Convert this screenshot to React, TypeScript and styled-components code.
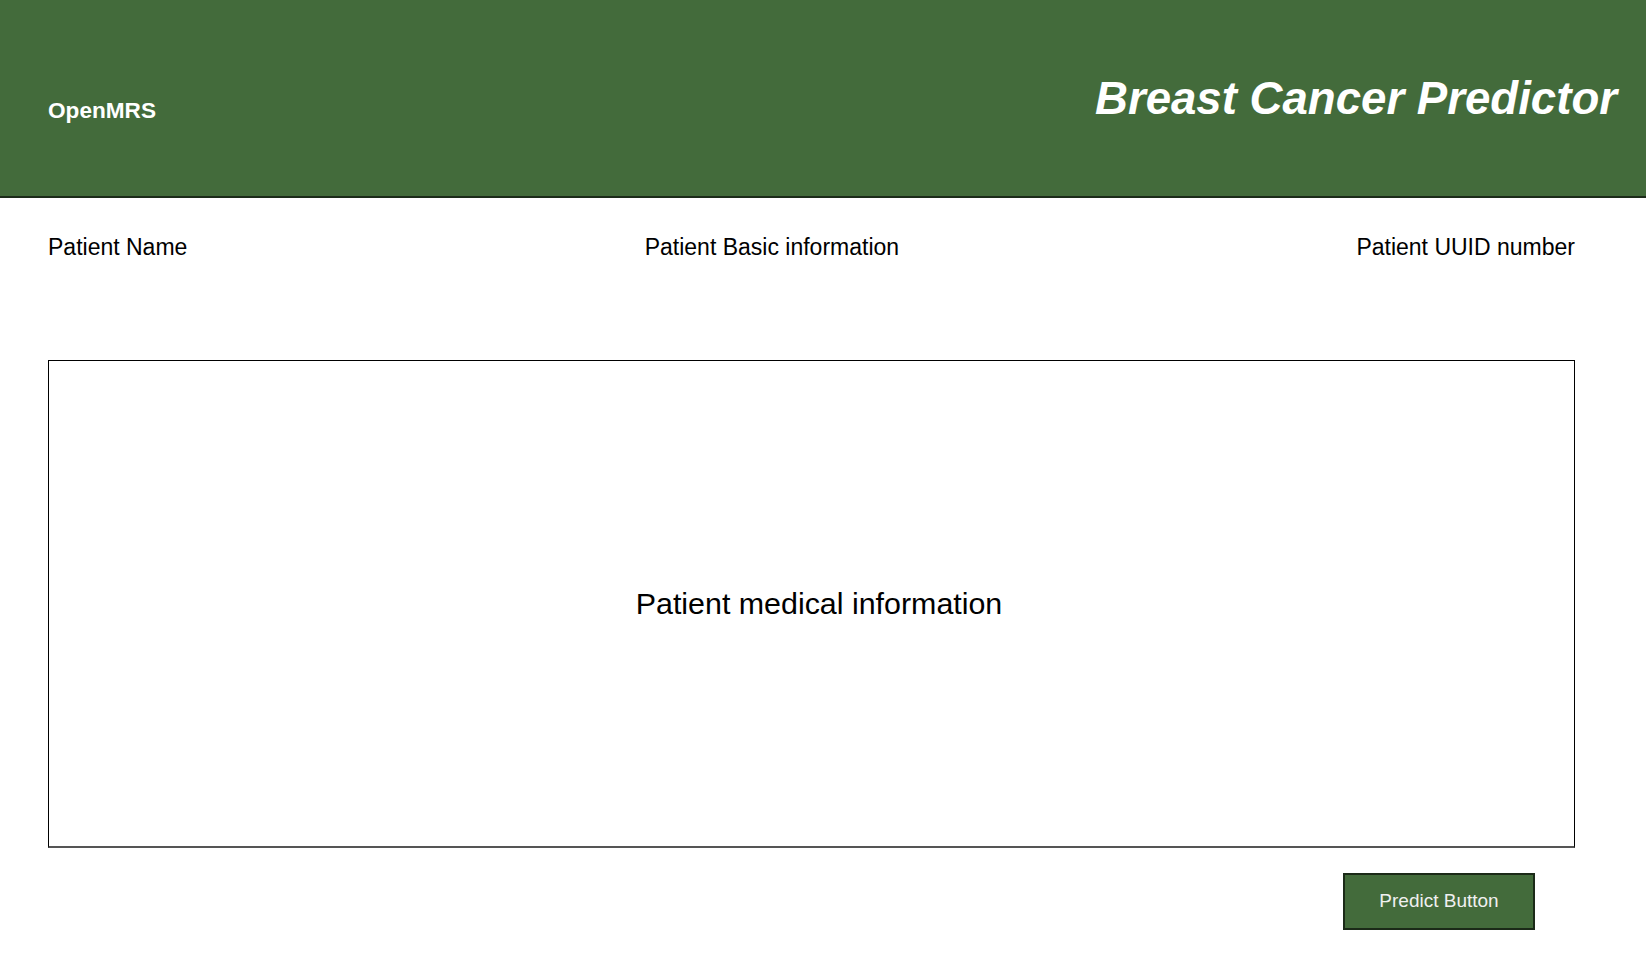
import React from "react";
import styled, { createGlobalStyle } from "styled-components";

const GREEN = "#436b3b";

const Global = createGlobalStyle`
  html, body { margin: 0; padding: 0; background: #ffffff; }
  body { font-family: "Liberation Sans", Arial, sans-serif; color: #000; }
`;

const Page = styled.div`
  width: 1646px;
  min-height: 972px;
  display: flex;
  flex-direction: column;
`;

const Header = styled.header`
  height: 196px;
  background: ${GREEN};
  border-bottom: 2px solid #1c2b19;
  display: flex;
  align-items: center;
  justify-content: space-between;
  padding: 0 29px 0 48px;
`;

const Brand = styled.div`
  color: #ffffff;
  font-weight: bold;
  font-size: 22.6px;
  margin-top: 26px;
`;

const Title = styled.h1`
  margin: 0;
  color: #ffffff;
  font-weight: bold;
  font-style: italic;
  font-size: 45.6px;
  margin-top: 2px;
`;

const Content = styled.main`
  width: 1527px;
  padding: 0 0 0 48px;
  display: flex;
  flex-direction: column;
`;

const InfoRow = styled.div`
  display: flex;
  justify-content: space-between;
  align-items: baseline;
  margin-top: 35px;
  height: 127px;
`;

const InfoLabel = styled.span`
  font-size: 23px;
  line-height: 28px;
`;

const MedicalBox = styled.section`
  height: 485px;
  border: 1px solid #000;
  border-bottom: 2px solid #555;
  display: flex;
  align-items: center;
  justify-content: center;
  padding-left: 15px;
`;

const MedicalText = styled.span`
  font-size: 30.4px;
`;

const Actions = styled.div`
  display: flex;
  justify-content: flex-end;
  padding-right: 40px;
  margin-top: 25px;
`;

const PredictButton = styled.button`
  width: 192px;
  height: 57px;
  background: ${GREEN};
  border: 2px solid #1b2a18;
  color: #f0f0f0;
  font-family: "Liberation Sans", Arial, sans-serif;
  font-size: 19px;
  cursor: pointer;
  padding: 0 0 2px 0;
`;

export default function App() {
  return (
    <>
      <Global />
      <Page>
        <Header>
          <Brand>OpenMRS</Brand>
          <Title>Breast Cancer Predictor</Title>
        </Header>
        <Content>
          <InfoRow>
            <InfoLabel>Patient Name</InfoLabel>
            <InfoLabel>Patient Basic information</InfoLabel>
            <InfoLabel>Patient UUID number</InfoLabel>
          </InfoRow>
          <MedicalBox>
            <MedicalText>Patient medical information</MedicalText>
          </MedicalBox>
          <Actions>
            <PredictButton>Predict Button</PredictButton>
          </Actions>
        </Content>
      </Page>
    </>
  );
}
